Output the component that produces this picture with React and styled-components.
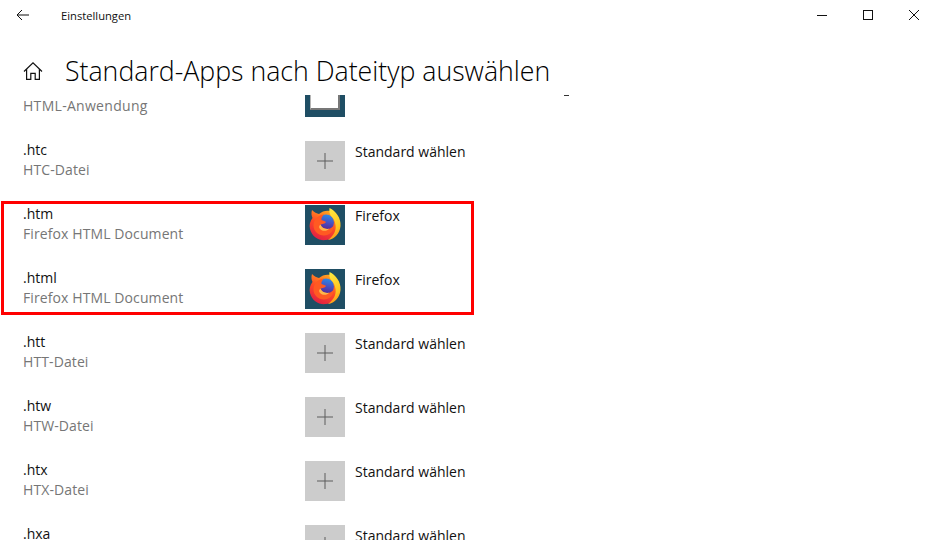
import React from "react";
import styled, { createGlobalStyle } from "styled-components";

const rows = [
  { ext: "", desc: "HTML-Anwendung", app: "", icon: "hta" },
  { ext: ".htc", desc: "HTC-Datei", app: "Standard wählen", icon: "plus" },
  { ext: ".htm", desc: "Firefox HTML Document", app: "Firefox", icon: "firefox" },
  { ext: ".html", desc: "Firefox HTML Document", app: "Firefox", icon: "firefox" },
  { ext: ".htt", desc: "HTT-Datei", app: "Standard wählen", icon: "plus" },
  { ext: ".htw", desc: "HTW-Datei", app: "Standard wählen", icon: "plus" },
  { ext: ".htx", desc: "HTX-Datei", app: "Standard wählen", icon: "plus" },
  { ext: ".hxa", desc: "", app: "Standard wählen", icon: "plus" },
];

const BackArrow = () => (
  <svg width="14" height="12" viewBox="0 0 14 12" fill="none" stroke="#111" strokeWidth="1">
    <path d="M13 6H1.2M6 1 1 6l5 5" />
  </svg>
);

const HomeGlyph = () => (
  <svg width="20" height="20" viewBox="0 0 20 20" fill="none" stroke="#111" strokeWidth="1.2">
    <path d="M1 10.5 10 1.8l9 8.7" />
    <path d="M3.6 8.2v10.2h4.2v-6h4.4v6h4.2V8.2" />
  </svg>
);

const MinimizeGlyph = () => (
  <svg width="10" height="10" viewBox="0 0 10 10" fill="none" stroke="#111" strokeWidth="1">
    <path d="M0 5.5h10" />
  </svg>
);

const MaximizeGlyph = () => (
  <svg width="10" height="10" viewBox="0 0 10 10" fill="none" stroke="#111" strokeWidth="1">
    <rect x="0.5" y="0.5" width="9" height="9" />
  </svg>
);

const CloseGlyph = () => (
  <svg width="10" height="10" viewBox="0 0 10 10" fill="none" stroke="#111" strokeWidth="1">
    <path d="M0 0l10 10M10 0 0 10" />
  </svg>
);

const PlusGlyph = () => (
  <svg width="16" height="16" viewBox="0 0 16 16" fill="none" stroke="#5c5c5c" strokeWidth="1">
    <path d="M8 0v16M0 8h16" />
  </svg>
);

const FirefoxLogo = ({ id }) => (
  <svg width="40" height="40" viewBox="0 0 40 40">
    <defs>
      <linearGradient id={`${id}-body`} x1="0.75" y1="0.1" x2="0.3" y2="1">
        <stop offset="0" stopColor="#ffa51f" />
        <stop offset="0.5" stopColor="#ff4a26" />
        <stop offset="1" stopColor="#e01f45" />
      </linearGradient>
      <linearGradient id={`${id}-tail`} x1="0.3" y1="0" x2="0.6" y2="1">
        <stop offset="0" stopColor="#ffe83f" />
        <stop offset="0.7" stopColor="#ffc21f" />
        <stop offset="1" stopColor="#ff8a1a" />
      </linearGradient>
      <linearGradient id={`${id}-globe`} x1="0.6" y1="0" x2="0.4" y2="1">
        <stop offset="0" stopColor="#2a8ae8" />
        <stop offset="0.5" stopColor="#4a4fc0" />
        <stop offset="1" stopColor="#5b1f8c" />
      </linearGradient>
    </defs>
    <path
      d="M7 5 C6 8 6.5 11 7.5 13 C5 16 4 20 5 24 C7 32 14 36 21 35 C29 34 35 28 35 20 C35 14 31 8 25 6 C22 5 17 6 14 9 C12 8.5 9 7.5 7 5Z"
      fill={`url(#${id}-body)`}
    />
    <circle cx="21" cy="17.5" r="8" fill={`url(#${id}-globe)`} />
    <path
      d="M10 15 C12 11.5 15 10 19 9.5 C17 11.5 16 13.5 16.5 15 C18 16 20.5 16 21 17 C20 19 17 19 15.5 19.5 C16 22.5 19 24.5 23 24 C26 23.5 28 22 29 20 C29 26 24.5 30.5 19 30.5 C13 30.5 8.5 26 8.5 20.5 C8.5 18.5 9 16.5 10 15Z"
      fill="#ff5a22"
    />
    <path d="M15.5 19.5 C16.5 22.5 20 24.5 24 23.8 C22 26.5 17.5 26.5 15 24 C13.5 22.5 14 20.5 15.5 19.5Z" fill="#ffb64a" />
    <path
      d="M24.5 3 C31 6 36 13 35.5 21 C35 28 30 34 23 35 C28.5 31 31.5 26 30.5 20 C30 15.5 28 13 26 11 C24.5 9 24 6 24.5 3Z"
      fill={`url(#${id}-tail)`}
    />
  </svg>
);

const AppIcon = ({ icon, id }) => {
  if (icon === "plus") {
    return (
      <PlusTile>
        <PlusGlyph />
      </PlusTile>
    );
  }
  if (icon === "firefox") {
    return (
      <Tile>
        <FirefoxLogo id={id} />
      </Tile>
    );
  }
  return (
    <Tile>
      <HtaWindow />
    </Tile>
  );
};

export default function App() {
  return (
    <Page>
      <GlobalStyle />
      <TitleBar>
        <BackButton>
          <BackArrow />
        </BackButton>
        <WindowTitle>Einstellungen</WindowTitle>
        <WindowControls>
          <Control>
            <MinimizeGlyph />
          </Control>
          <Control>
            <MaximizeGlyph />
          </Control>
          <Control>
            <CloseGlyph />
          </Control>
        </WindowControls>
      </TitleBar>
      <PageHeader>
        <HomeIcon>
          <HomeGlyph />
        </HomeIcon>
        <Heading>Standard-Apps nach Dateityp auswählen</Heading>
        <StrayDash />
      </PageHeader>
      <Viewport>
        <List>
          {rows.map((row, i) => (
            <Row key={i}>
              <FileType>
                <Ext>{row.ext}</Ext>
                <Desc $wide={i === 0}>{row.desc}</Desc>
              </FileType>
              <AppIcon icon={row.icon} id={`ff${i}`} />
              <AppName>{row.app}</AppName>
            </Row>
          ))}
        </List>
        <Highlight />
      </Viewport>
    </Page>
  );
}

const GlobalStyle = createGlobalStyle`
  html, body {
    margin: 0;
    padding: 0;
    background: #fff;
  }
  body {
    font-family: "Open Sans", "Noto Sans", sans-serif;
    color: #000;
  }
`;

const Page = styled.div`
  width: 936px;
  height: 540px;
  overflow: hidden;
  display: flex;
  flex-direction: column;
  background: #fff;
`;

const TitleBar = styled.div`
  display: flex;
  align-items: center;
  height: 30px;
  flex: none;
`;

const BackButton = styled.div`
  width: 46px;
  height: 30px;
  display: flex;
  align-items: center;
  justify-content: center;
`;

const WindowTitle = styled.div`
  margin-left: 15px;
  font-size: 11.2px;
  color: #111;
`;

const WindowControls = styled.div`
  margin-left: auto;
  margin-right: -1px;
  display: flex;
`;

const Control = styled.div`
  width: 46px;
  height: 30px;
  display: flex;
  align-items: center;
  justify-content: center;
`;

const PageHeader = styled.div`
  position: relative;
  z-index: 1;
  height: 65px;
  flex: none;
  display: flex;
  align-items: center;
  padding-left: 23px;
  background: #fff;
`;

const HomeIcon = styled.div`
  width: 20px;
  height: 20px;
  display: flex;
  margin-right: 22px;
  margin-top: 17px;
`;

const Heading = styled.h1`
  margin: 17px 0 0;
  font-size: 26.7px;
  font-weight: 300;
  line-height: 36px;
  color: #000;
  white-space: nowrap;
`;

const StrayDash = styled.div`
  position: absolute;
  left: 564px;
  bottom: -1px;
  width: 5px;
  height: 1px;
  background: #333;
`;

const Viewport = styled.div`
  position: relative;
  flex: 1;
  min-height: 0;
`;

const List = styled.div`
  display: flex;
  flex-direction: column;
  margin-top: -18px;
  padding-left: 23px;
`;

const Row = styled.div`
  display: flex;
  align-items: flex-start;
  height: 64px;
  flex: none;
`;

const FileType = styled.div`
  width: 282px;
  flex: none;
  margin-top: -1px;
`;

const Ext = styled.div`
  font-size: 14px;
  line-height: 20px;
  height: 20px;
  color: #111;
`;

const Desc = styled.div`
  font-size: 14px;
  line-height: 20px;
  letter-spacing: ${(p) => (p.$wide ? "0.3px" : "0.1px")};
  color: #767676;
`;

const Tile = styled.div`
  width: 40px;
  height: 40px;
  flex: none;
  background: #1f4e64;
  display: flex;
  align-items: center;
  justify-content: center;
`;

const PlusTile = styled(Tile)`
  background: #cccccc;
`;

const HtaWindow = styled.div`
  align-self: flex-start;
  width: 30px;
  height: 33px;
  box-sizing: border-box;
  background: #fff;
  border: 1px solid #b5b5b5;
  border-right: 2px solid #777;
  border-bottom: 2px solid #777;
`;

const AppName = styled.div`
  margin: 1px 0 0 10px;
  font-size: 14px;
  line-height: 20px;
  color: #111;
`;

const Highlight = styled.div`
  position: absolute;
  left: 1px;
  top: 106px;
  width: 473px;
  height: 114px;
  box-sizing: border-box;
  border: 3px solid #ff0000;
  pointer-events: none;
`;
